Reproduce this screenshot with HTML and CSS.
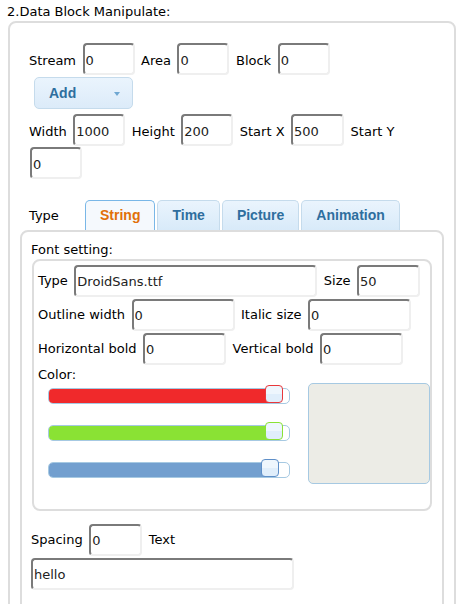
FILE: index.html
```html
<!DOCTYPE html>
<html>
<head>
<meta charset="utf-8">
<link rel="stylesheet" href="styles.css">
</head>
<body>
<div class="title">2.Data Block Manipulate:</div>
<div class="box">
  <div class="row top">
    <span class="lbl">Stream</span><input class="in w52" value="0">
    <span class="lbl">Area</span><input class="in w52" value="0">
    <span class="lbl">Block</span><input class="in w52" value="0">
  </div>
  <button class="add"><span>Add</span><span class="caret"></span></button>
  <div class="row top row2">
    <span class="lbl">Width</span><input class="in w52" value="1000">
    <span class="lbl">Height</span><input class="in w52" value="200">
    <span class="lbl">Start X</span><input class="in w53" value="500">
    <span class="lbl">Start Y</span><input class="in w52 wrapin" value="0">
  </div>
  <div class="tabrow">
    <span class="lbl">Type</span>
    <ul class="tabs">
      <li class="tab active">String</li>
      <li class="tab">Time</li>
      <li class="tab">Picture</li>
      <li class="tab">Animation</li>
    </ul>
  </div>
  <div class="panel">
    <div class="fs-title">Font setting:</div>
    <div class="fieldset">
      <div class="frow">
        <span class="lbl">Type</span><input class="in w243" value="DroidSans.ttf">
        <span class="lbl">Size</span><input class="in w63" value="50">
      </div>
      <div class="frow">
        <span class="lbl">Outline width</span><input class="in w103" value="0">
        <span class="lbl">Italic size</span><input class="in w103" value="0">
      </div>
      <div class="frow">
        <span class="lbl">Horizontal bold</span><input class="in w83" value="0">
        <span class="lbl">Vertical bold</span><input class="in w83" value="0">
      </div>
      <div class="color-lbl">Color:</div>
      <div class="color-area">
        <div class="sliders">
          <div class="slider red"><div class="fill" style="width:226px"></div><span class="handle" style="left:216px"></span></div>
          <div class="slider green"><div class="fill" style="width:226px"></div><span class="handle" style="left:216px"></span></div>
          <div class="slider blue"><div class="fill" style="width:222px"></div><span class="handle" style="left:212px"></span></div>
        </div>
        <div class="preview"></div>
      </div>
    </div>
    <div class="row brow">
      <span class="lbl">Spacing</span><input class="in w53" value="0">
      <span class="lbl">Text</span><input class="in w263" value="hello">
    </div>
  </div>
</div>
</body>
</html>
```

FILE: styles.css
```css
html, body {
  margin: 0;
  padding: 0;
  background: #fff;
}
body {
  padding: 0 2px 0 8px;
  font-family: "DejaVu Sans", Verdana, sans-serif;
  font-size: 13px;
  line-height: 16px;
  color: #000;
}
.title {
  padding-top: 4px;
  margin-left: -1px;
  height: 17px;
}
.box {
  border: 2px solid #dddddd;
  border-radius: 8px;
  padding: 20px 19px 20px 19px;
  min-height: 640px;
}
.row {
  display: flex;
  flex-wrap: wrap;
  align-items: center;
  column-gap: 6.5px;
  row-gap: 1px;
}
.row.top {
  align-items: baseline;
}
.lbl {
  white-space: nowrap;
}
.in {
  box-sizing: border-box;
  height: 32px;
  margin: 0;
  padding: 0 1px;
  border-style: solid;
  border-width: 2px;
  border-color: #7a7a7a #efefef #efefef #7a7a7a;
  border-radius: 4px;
  font-family: "DejaVu Sans", Verdana, sans-serif;
  font-size: 13px;
  color: #222;
  background: #fff;
  outline: none;
}
.row.top .in {
  padding-top: 3px;
}
.w52 { width: 52px; }
.w53 { width: 53px; }
.w63 { width: 63px; }
.w83 { width: 83px; }
.w103 { width: 103px; }
.w243 { width: 243px; }
.w263 { width: 263px; }
.wrapin { margin-left: 1px; }
.add {
  display: flex;
  align-items: center;
  justify-content: space-between;
  box-sizing: border-box;
  width: 99px;
  height: 32px;
  margin: 2px 0 0 5px;
  padding: 0 12px 0 14px;
  border: 1px solid #c5dbec;
  border-radius: 5px;
  background: linear-gradient(#eaf4fd, #dcebf9);
  font-family: "Liberation Sans", Arial, sans-serif;
  font-weight: bold;
  font-size: 14px;
  color: #2e6e9e;
}
.caret {
  width: 0;
  height: 0;
  border-left: 3.5px solid transparent;
  border-right: 3.5px solid transparent;
  border-top: 4px solid #6fa7d2;
  margin-top: 1px;
}
.row2 {
  margin-top: 5px;
}
.tabrow {
  display: flex;
  align-items: center;
  margin-top: 21px;
  height: 30px;
}
.tabrow .lbl {
  width: 56px;
  padding-top: 2px;
}
.tabs {
  display: flex;
  gap: 2px;
  list-style: none;
  margin: 0;
  padding: 0;
  align-self: stretch;
}
.tab {
  box-sizing: border-box;
  height: 30px;
  line-height: 29px;
  padding: 0 14px;
  border: 1px solid #c5dbec;
  border-bottom: none;
  border-radius: 5px 5px 0 0;
  background: linear-gradient(#eaf4fd, #d8eaf9);
  font-family: "Liberation Sans", Arial, sans-serif;
  font-weight: bold;
  font-size: 14px;
  color: #2e6e9e;
}
.tab.active {
  background: #f5f9fd;
  border-color: #79b7e7;
  color: #e17009;
}
.panel {
  margin: 0 -9px;
  border: 2px solid #dddddd;
  border-radius: 8px;
  padding: 10px 9px 30px 9px;
  min-height: 400px;
}
.fs-title {
  height: 17px;
}
.fieldset {
  margin: 0 1px;
  border: 2px solid #dddddd;
  border-radius: 8px;
  padding: 4px 0 25px 4px;
}
.frow {
  display: flex;
  align-items: center;
  column-gap: 6.5px;
  margin-bottom: 2px;
}
.color-lbl {
  height: 16px;
}
.color-area {
  display: flex;
  align-items: flex-start;
  margin-top: 0;
}
.sliders {
  display: flex;
  flex-direction: column;
  gap: 21px;
  margin-left: 10px;
  padding-top: 5px;
  width: 242px;
}
.slider {
  position: relative;
  box-sizing: border-box;
  height: 16px;
  border: 1px solid #a6c9e2;
  border-radius: 5px;
  background: #fff;
}
.fill {
  height: 100%;
  border-radius: 4px 0 0 4px;
}
.red .fill { background: #f0292b; }
.green .fill { background: #8ae234; }
.blue .fill { background: #729fcf; }
.handle {
  position: absolute;
  top: -4px;
  box-sizing: border-box;
  width: 18px;
  height: 18px;
  border: 1px solid #79b7e7;
  border-radius: 4px;
  background: linear-gradient(#eef6fd 50%, #e0eefb 50%);
}
.red .handle { border-color: #e8383b; }
.green .handle { border-color: #8ae234; }
.blue .handle { border-color: #5f8fc8; }
.preview {
  box-sizing: border-box;
  width: 122px;
  height: 101px;
  margin-left: 18px;
  margin-top: 0;
  border: 1px solid #a6c9e2;
  border-radius: 5px;
  background: #ecece6;
}
.brow {
  margin-top: 13px;
  row-gap: 2px;
}
```
